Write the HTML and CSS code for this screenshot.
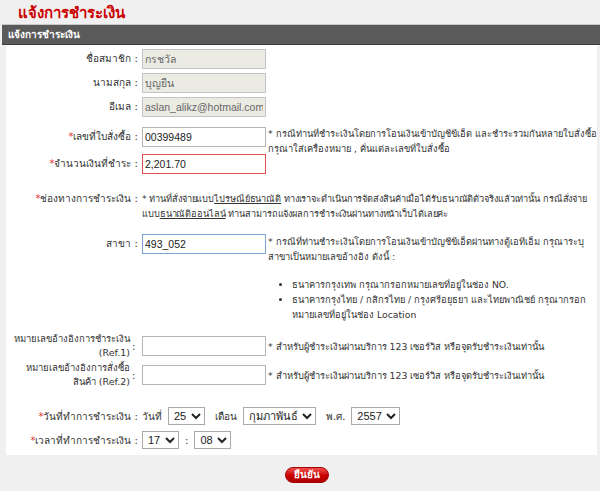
FILE: index.html
```html
<!DOCTYPE html>
<html lang="th">
<head>
    <meta charset="UTF-8">
    <title>แจ้งการชำระเงิน</title>
    <link rel="stylesheet" href="styles.css">
</head>
<body>
    <h1 class="page-title">แจ้งการชำระเงิน</h1>

    <div class="bar">แจ้งการชำระเงิน</div>

    <!-- ฟอร์มแจ้งการชำระเงิน -->
    <form class="panel">
        <div class="row r-name">
            <label>ชื่อสมาชิก :</label>
            <div class="field"><input type="text" class="box readonly" value="กรชวัล" readonly></div>
        </div>
        <div class="row r-gap">
            <label>นามสกุล :</label>
            <div class="field"><input type="text" class="box readonly" value="บุญยืน" readonly></div>
        </div>
        <div class="row r-gap">
            <label>อีเมล :</label>
            <div class="field"><input type="text" class="box readonly" value="aslan_alikz@hotmail.com" readonly></div>
        </div>
        <div class="row r-order">
            <label><span class="req">*</span>เลขที่ใบสั่งซื้อ :</label>
            <div class="field">
                <input type="text" class="box" value="00399489">
                <p class="note">* กรณีท่านที่ชำระเงินโดยการโอนเงินเข้าบัญชีขีเอ็ด และชำระรวมกันหลายใบสั่งซื้อ<br>กรุณาใส่เครื่องหมาย , คั่นแต่ละเลขที่ใบสั่งซื้อ</p>
            </div>
        </div>
        <div class="row r-amount">
            <label><span class="req">*</span>จำนวนเงินที่ชำระ :</label>
            <div class="field"><input type="text" class="box error" value="2,201.70"></div>
        </div>
        <div class="row r-channel">
            <label><span class="req">*</span>ช่องทางการชำระเงิน :</label>
            <p class="text">* ท่านที่สั่งจ่ายแบบ<u>ไปรษณีย์ธนาณัติ</u> ทางเราจะดำเนินการจัดส่งสินค้าเมื่อได้รับธนาณัติตัวจริงแล้วเท่านั้น กรณีสั่งจ่าย<br>แบบ<u>ธนาณัติออนไลน์</u> ท่านสามารถแจ้งผลการชำระเงินผ่านทางหน้าเว็บได้เลยค่ะ</p>
        </div>
        <div class="row r-branch">
            <label>สาขา :</label>
            <div class="field">
                <input type="text" class="box focus" value="493_052">
                <div class="note">
                    <p>* กรณีที่ท่านชำระเงินโดยการโอนเงินเข้าบัญชีขีเอ็ดผ่านทางตู้เอทีเอ็ม กรุณาระบุ<br>สาขาเป็นหมายเลขอ้างอิง ดังนี้ :</p>
                    <ul>
                        <li>ธนาคารกรุงเทพ กรุณากรอกหมายเลขที่อยู่ในช่อง NO.</li>
                        <li>ธนาคารกรุงไทย / กสิกรไทย / กรุงศรีอยุธยา และไทยพาณิชย์ กรุณากรอก<br>หมายเลขที่อยู่ในช่อง Location</li>
                    </ul>
                </div>
            </div>
        </div>
        <div class="row r-ref1">
            <label class="ref">หมายเลขอ้างอิงการชำระเงิน<br>(Ref.1)</label>
            <span class="colon">:</span>
            <div class="field mid"><input type="text" class="box"><span class="note one">* สำหรับผู้ชำระเงินผ่านบริการ 123 เซอร์วิส หรือจุดรับชำระเงินเท่านั้น</span></div>
        </div>
        <div class="row r-ref2">
            <label class="ref">หมายเลขอ้างอิงการสั่งซื้อ<br>สินค้า (Ref.2)</label>
            <span class="colon">:</span>
            <div class="field mid"><input type="text" class="box"><span class="note one">* สำหรับผู้ชำระเงินผ่านบริการ 123 เซอร์วิส หรือจุดรับชำระเงินเท่านั้น</span></div>
        </div>
        <div class="row r-date">
            <label><span class="req">*</span>วันที่ทำการชำระเงิน :</label>
            <div class="field mid">
                <span>วันที่</span>
                <select class="sel"><option>25</option></select>
                <span class="sp">เดือน</span>
                <select class="sel"><option>กุมภาพันธ์</option></select>
                <span class="sp">พ.ศ.</span>
                <select class="sel"><option>2557</option></select>
            </div>
        </div>
        <div class="row r-time">
            <label><span class="req">*</span>เวลาที่ทำการชำระเงิน :</label>
            <div class="field mid">
                <select class="sel"><option>17</option></select>
                <span>:</span>
                <select class="sel"><option>08</option></select>
            </div>
        </div>
    </form>

    <div class="actions">
        <button type="button" class="btn-ok">ยืนยัน</button>
    </div>
</body>
</html>
```

FILE: styles.css
```css
/* พื้นหลังทั้งหน้า */
body {
    margin: 0;
    background: #f0f0f0;
    font-family: Tahoma, "DejaVu Sans", "Noto Sans", sans-serif;
    font-size: 10px;
    color: #333;
}

.page-title {
    margin: 0;
    padding: 3px 0 0 18px;
    height: 21px;
    line-height: 20px;
    font-size: 15px;
    font-weight: bold;
    color: #cc0000;
}

/* แถบหัวข้อสีเทาเข้ม */
.bar {
    margin: 0 0 0 2px;
    height: 19px;
    line-height: 19px;
    padding-left: 6px;
    background: #5a5a5a;
    border-top: 1px solid #c8c8c8;
    border-bottom: 1px solid #3c3c3c;
    color: #fff;
    font-weight: bold;
    font-size: 10px;
}

.panel {
    margin: 0 3px 0 6px;
    padding: 4px 0 4px;
    background: #fff;
    display: flex;
    flex-direction: column;
}

.row {
    display: grid;
    grid-template-columns: 132px 1fr;
    column-gap: 4px;
    align-items: start;
}

.row label {
    text-align: right;
    line-height: 20px;
    white-space: nowrap;
}

.req {
    color: #e03030;
}

.field {
    display: flex;
    align-items: flex-start;
}

.field.mid {
    align-items: center;
    gap: 6px;
}

.box {
    box-sizing: border-box;
    width: 124px;
    height: 20px;
    margin: 0;
    padding: 1px 2px;
    border: 1px solid #b5b5b5;
    background: #fff;
    font: 10.5px Arial, "Liberation Sans", sans-serif;
    color: #222;
    flex: none;
}

.box.readonly {
    background: #ebebe4;
    color: #666;
    border-color: #c4c4c4;
}

.box.error {
    border-color: #e05050;
}

.box.focus {
    border-color: #7aa3d8;
}

/* ข้อความหมายเหตุด้านขวา */
.note {
    margin: 0 0 0 2px;
    line-height: 15px;
    font-size: 9.3px;
    white-space: nowrap;
    color: #333;
}

.note.one {
    margin-left: -4px;
}

.note p {
    margin: 0;
}

.note ul {
    margin: 13px 0 0;
    padding-left: 24px;
    list-style: disc;
}

.text {
    margin: 0;
    line-height: 15px;
    font-size: 9.2px;
    letter-spacing: -0.1px;
    white-space: nowrap;
}

.r-gap { margin-top: 4px; }
.r-order { margin-top: 10px; }
.r-order .note { margin-top: -1px; }
.r-amount { margin-top: -2px; }
.r-channel { margin-top: 17px; }
.r-channel label { line-height: 15px; }
.r-branch { margin-top: 13px; }

/* Ref.1 และ Ref.2 มีช่องว่างโคลอนแยก */
.r-ref1, .r-ref2 {
    grid-template-columns: 124px 8px 1fr;
    column-gap: 2px;
    align-items: center;
}

.r-ref1 { margin-top: 10px; }
.r-ref2 { margin-top: 1px; }

.row .ref {
    line-height: 14px;
    font-size: 9.5px;
}

.r-date { margin-top: 18px; }
.r-time { margin-top: 4px; }

.sp {
    margin-left: 4px;
}

.sel {
    height: 18px;
    margin: 0;
    padding: 0 1px;
    border: 1px solid #a9a9a9;
    background: #fff;
    font: 11px Arial, "Liberation Sans", sans-serif;
    color: #222;
}

.actions {
    display: flex;
    justify-content: center;
    padding: 12px 0 0 14px;
}

.btn-ok {
    width: 44px;
    height: 16px;
    padding: 0;
    border: 1px solid #a00000;
    border-radius: 8px;
    background: linear-gradient(#f25050, #c80000 55%, #b00000);
    color: #fff;
    font-family: Tahoma, "DejaVu Sans", sans-serif;
    font-size: 10px;
    font-weight: bold;
    line-height: 14px;
    cursor: pointer;
}
```
